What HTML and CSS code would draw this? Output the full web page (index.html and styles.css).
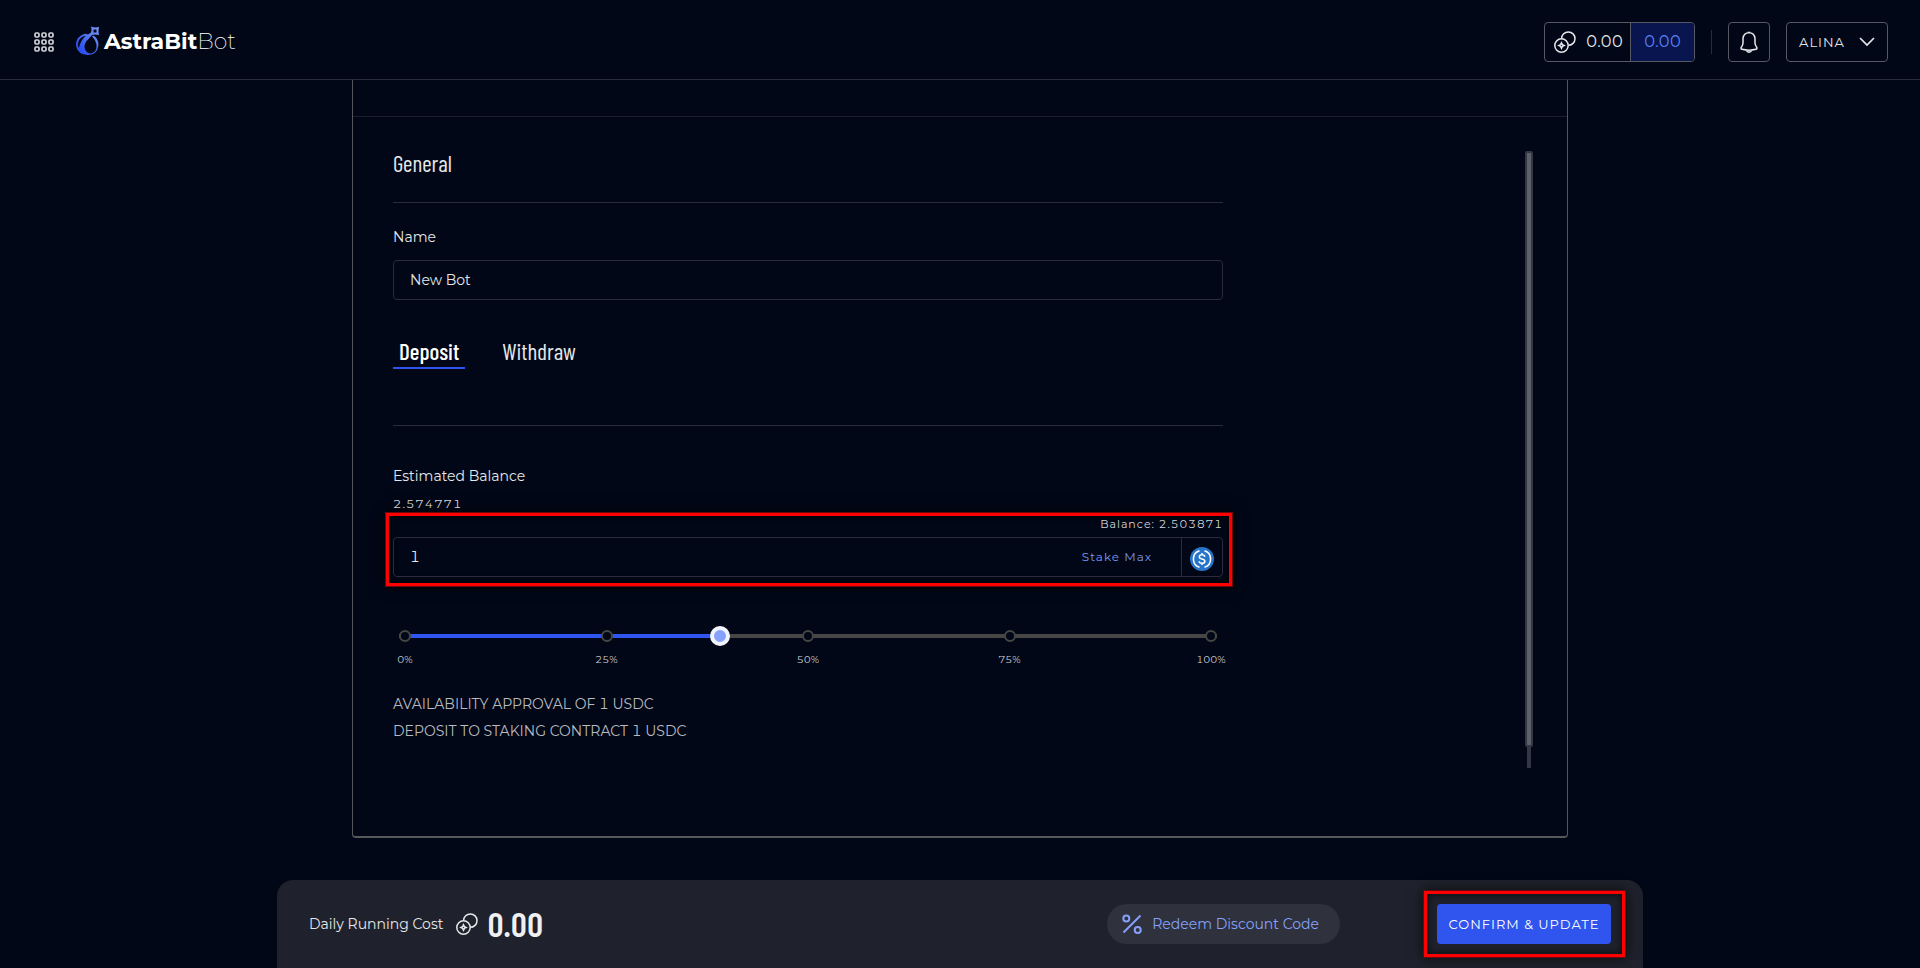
FILE: index.html
```html
<!DOCTYPE html>
<html lang="en">
<head>
<meta charset="utf-8">
<title>AstraBit Bot</title>
<link rel="stylesheet" href="styles.css">
</head>
<body>
<header class="topbar">
  <div class="brand">
    <button class="apps" aria-label="Apps">
      <svg width="20" height="20" viewBox="0 0 20 20" fill="none" stroke="currentColor" stroke-width="1.7"><rect x="1" y="1" width="4" height="4" rx="1.2"/><rect x="8" y="1" width="4" height="4" rx="1.2"/><rect x="15" y="1" width="4" height="4" rx="1.2"/><rect x="1" y="8" width="4" height="4" rx="1.2"/><rect x="8" y="8" width="4" height="4" rx="1.2"/><rect x="15" y="8" width="4" height="4" rx="1.2"/><rect x="1" y="15" width="4" height="4" rx="1.2"/><rect x="8" y="15" width="4" height="4" rx="1.2"/><rect x="15" y="15" width="4" height="4" rx="1.2"/></svg>
    </button>
    <a class="logo" href="#">
      <svg width="24" height="30" viewBox="0 0 24 30">
        <defs><linearGradient id="drop" x1="0" y1="1" x2="1" y2="0"><stop offset="0.2" stop-color="#2c50f0"/><stop offset="1" stop-color="#7f9cf8"/></linearGradient></defs>
        <path fill="url(#drop)" fill-rule="evenodd" d="M15 0.500Q19 2 23 1Q22 5 23 9Q19 8 16 9Q14 11 13 12.500Q8 17 8.500 21.500Q9.500 27 14.500 27.500Q19 27 20.300 22.500Q21.500 16 16 10.500L17.500 9.500Q23 13 22.300 20Q21 29 11.500 29Q2 28.500 0 20Q-0.500 11 8 8Q10 7.500 12 8.500L15 6.500Q16 4 15 0.500ZM17.500 3.500V6.500H20.500V3.500ZM10 9.500Q2 11 1.800 19Q2 20.500 3 22Q4 15 10 9.500Z"/>
      </svg>
      <span class="wordmark"><b>AstraBit</b><span class="wordmark-thin">Bot</span></span>
    </a>
  </div>
  <div class="account">
    <div class="credits">
      <span class="credit"><svg class="coins" width="22" height="22" viewBox="0 0 22 22" fill="none" stroke="currentColor" stroke-width="1.500"><circle cx="7.500" cy="14.500" r="6.700"/><path d="M7.600 7.500A6.700 6.700 0 1 1 14.300 14.300M7.500 11.800L8.400 13.600L10.200 14.500L8.400 15.400L7.500 17.200L6.600 15.400L4.800 14.500L6.600 13.600Z"/></svg>0.00</span>
      <span class="credit credit-blue">0.00</span>
    </div>
    <span class="separator"></span>
    <button class="bell" aria-label="Notifications">
      <svg width="18" height="22" viewBox="0 0 18 22" fill="none" stroke="currentColor" stroke-width="1.500" stroke-linejoin="round"><path d="M7.500 1.500H10.500M9 1.500Q3.500 2 3 7.500V12Q3 14 1.200 16.500Q0.700 18 2 18.300Q9 20 16 18.300Q17.300 18 16.800 16.500Q15 14 15 12V7.500Q14.500 2 9 1.500ZM6.500 20Q9 22.300 11.500 20"/></svg>
    </button>
    <button class="user">ALINA<svg width="16" height="10" viewBox="0 0 16 10" fill="none" stroke="currentColor" stroke-width="1.700"><path d="M1 1L8 8L15 1"/></svg></button>
  </div>
</header>
<main class="panel">
  <div class="panel-head"></div>
  <div class="panel-body">
    <form class="form">
      <h2 class="title">General</h2>
      <label class="label" for="name">Name</label>
      <input class="field" id="name" value="New Bot">
      <div class="tabs" role="tablist">
        <button type="button" class="tab tab-active" role="tab" aria-selected="true">Deposit</button>
        <button type="button" class="tab" role="tab" aria-selected="false">Withdraw</button>
      </div>
      <div class="label estimate-label">Estimated Balance</div>
      <div class="estimate">2.574771</div>
      <div class="stake marked">
        <label class="balance" for="amount">Balance: 2.503871</label>
        <div class="stake-field">
          <input class="amount" id="amount" value="1">
          <button type="button" class="max">Stake Max</button>
          <span class="token">
            <svg width="24" height="24" viewBox="0 0 24 24" fill="none" stroke="#fff" stroke-width="1.500"><circle cx="12" cy="12" r="12" fill="#2775ca" stroke="none"/><path d="M9.500 3.700A8.700 8.700 0 0 0 9.500 20.300M14.500 3.700A8.700 8.700 0 0 1 14.500 20.300M14.800 9.800Q14.500 7.800 12 7.800T9.300 9.800Q9.300 11.500 12 12T14.900 14.300Q14.700 16.200 12 16.200T9.100 14.200M12 6V8M12 16V18"/></svg>
          </span>
        </div>
      </div>
      <div class="slider">
        <div class="rail">
          <i class="stop"></i><i class="stop"></i><i class="stop"></i><i class="stop"></i><i class="stop"></i>
        </div>
        <input class="range" type="range" min="0" max="100" value="39" aria-label="Share of balance">
        <div class="ticks"><span>0%</span><span>25%</span><span>50%</span><span>75%</span><span>100%</span></div>
      </div>
      <p class="note">AVAILABILITY APPROVAL OF 1 USDC</p>
      <p class="note">DEPOSIT TO STAKING CONTRACT 1 USDC</p>
    </form>
    <div class="scroll"><div class="scroll-thumb"></div></div>
  </div>
</main>
<footer class="costbar">
  <div class="cost"><span class="cost-label">Daily Running Cost</span>
    <svg class="coins" width="22" height="22" viewBox="0 0 22 22" fill="none" stroke="currentColor" stroke-width="1.500"><circle cx="7.500" cy="14.500" r="6.700"/><path d="M7.600 7.500A6.700 6.700 0 1 1 14.300 14.300M7.500 11.800L8.400 13.600L10.200 14.500L8.400 15.400L7.500 17.200L6.600 15.400L4.800 14.500L6.600 13.600Z"/></svg>
    <strong class="cost-value">0.00</strong>
  </div>
  <button class="redeem"><svg width="20" height="20" viewBox="0 0 20 20" fill="none" stroke="currentColor" stroke-width="2"><path d="M1.500 18.500L18.500 1.500"/><circle cx="4.300" cy="4.500" r="3"/><circle cx="15.700" cy="16" r="3"/></svg>Redeem Discount Code</button>
  <div class="marked confirm-wrap"><button class="confirm">CONFIRM &amp; UPDATE</button></div>
</footer>
</body>
</html>
```
FILE: styles.css
```css
* { box-sizing: border-box; }
html, body { height: 100%; }
body {
  margin: 0;
  display: flex;
  flex-direction: column;
  background: #010716;
  color: #e6e7ea;
  font: 14px/20px Montserrat, "Open Sans", sans-serif;
  font-variant-numeric: tabular-nums;
  overflow: hidden;
}
button, input { font: inherit; font-variant-numeric: inherit; color: inherit; background: none; border: 0; padding: 0; margin: 0; }
svg { display: block; flex: none; }

.topbar {
  height: 80px;
  flex: none;
  display: flex;
  justify-content: space-between;
  align-items: center;
  padding: 4px 32px 0 34px;
  border-bottom: 1px solid #292c3c;
}
.brand, .account, .logo, .credits, .credit { display: flex; align-items: center; }
.brand { gap: 22px; }
.apps { color: #d3d4d8; }
.logo { gap: 4px; color: #fff; text-decoration: none; }
.logo svg { margin-bottom: 2px; }
.wordmark { font: 22px/28px Montserrat, Inter, sans-serif; }
.wordmark b { font-weight: 700; }
.wordmark-thin { font-weight: 200; }
.credits { height: 40px; border: 1px solid #565864; border-radius: 4px; overflow: hidden; line-height: 38px; }
.credit { height: 100%; gap: 10px; padding: 0 7px 0 9px; font-size: 16px; }
.credit-blue { background: #09154e; color: #5b80f7; border-left: 1px solid #565864; padding: 0 13px; }
.separator { width: 1px; height: 24px; background: #292c3c; margin: 0 16px; }
.bell, .user { height: 40px; border: 1px solid #565864; border-radius: 4px; display: flex; align-items: center; justify-content: center; }
.bell { width: 42px; margin-right: 16px; }
.user { width: 102px; gap: 14px; font-size: 13px; letter-spacing: 1px; }

.panel {
  width: 1216px;
  max-width: 100%;
  flex: none;
  margin: 0 auto;
  border: 1px solid #565758;
  border-top: 0;
  border-bottom-width: 2px;
  border-radius: 0 0 4px 4px;
}
.panel-head { height: 37px; border-bottom: 1px solid #1b1f2a; }
.panel-body { display: flex; justify-content: space-between; padding: 34px 34px 68px 40px; }
.form { width: 830px; }
.title { margin: 0; height: 52px; border-bottom: 1px solid #292c3c; font: 23px/24px "Barlow Condensed", "Liberation Sans Narrow", sans-serif; }
.label { display: block; margin: 24px 0 13px; color: #e6e7ea; }
.field { display: block; width: 100%; height: 40px; border: 1px solid #292c3c; border-radius: 4px; padding: 0 16px; }
.tabs { display: flex; gap: 31px; height: 126px; padding-top: 37px; border-bottom: 1px solid #292c3c; }
.tab { height: 32px; padding: 0 6px 2px; border-bottom: 2px solid transparent; font: 23px/28px "Barlow Condensed", "Liberation Sans Narrow", sans-serif; }
.tab-active { border-color: #2f55ee; color: #fff; font-weight: 500; }
.estimate-label { margin: 40px 0 8px; }
.estimate { font-size: 12px; letter-spacing: 1px; color: #d3d4d8; }
.marked { border: 4px solid #f00; outline: 1px solid #70050c; outline-offset: -1px; box-shadow: 0 0 12px #000a, inset 0 0 8px #000a; }
.stake { margin: -2px -10px 0 -8px; padding: 0 6px 6px 4px; }
.balance { display: block; text-align: right; font-size: 11px; line-height: 16px; letter-spacing: 1px; color: #d3d4d8; margin-bottom: 5px; }
.stake-field { display: flex; height: 40px; border: 1px solid #292c3c; border-radius: 4px; }
.amount { flex: 1; padding-left: 16px; }
.max { width: 128px; font-size: 12px; letter-spacing: 1px; color: #7b98f5; }
.token { width: 41px; border-left: 1px solid #292c3c; display: grid; place-items: center; padding-top: 4px; }
.slider { position: relative; margin: 43px 6px 0; }
.rail { display: flex; justify-content: space-between; height: 12px; align-items: center; background: linear-gradient(90deg, #2f55ee 39%, #464645 39%) center / 100% 4px no-repeat; }
.stop { width: 12px; height: 12px; border: 2px solid #464645; border-radius: 50%; background: #010716; }
.range { position: absolute; top: -4px; left: 0; width: 100%; height: 20px; appearance: none; }
.range::-webkit-slider-thumb { appearance: none; width: 20px; height: 20px; border-radius: 50%; border: 4px solid #f1f4fe; background: #86a1fb; }
.ticks { display: flex; justify-content: space-between; margin: 8px -24px 0; font-size: 10px; color: #d3d4d8; }
.ticks span { width: 60px; text-align: center; }
.note { margin: 0 0 7px; color: #b9bbc0; }
.slider + .note { margin-top: 24px; }
.scroll { width: 8px; height: 617px; background: linear-gradient(#333744, #333744) center / 4px 100% no-repeat; }
.scroll-thumb { height: 596px; border: 2px solid #333744; border-radius: 2px; background: #5d6068; }

.costbar {
  width: 1366px;
  max-width: 100%;
  flex: 1;
  margin: 42px auto 0;
  display: flex;
  align-items: flex-start;
  padding: 10px 17px 0 32px;
  background: #1f222c;
  border-radius: 16px 16px 0 0;
}
.cost { flex: 1; display: flex; align-items: center; gap: 9px; height: 68px; }
.cost-label { margin-right: 4px; }
.cost-value { font: 600 34px/36px "Barlow Condensed", "Liberation Sans Narrow", sans-serif; font-variant-numeric: tabular-nums; color: #f0f0f2; }
.redeem { display: flex; align-items: center; gap: 10px; height: 40px; margin: 14px 83px 0 0; padding: 0 21px 0 15px; border-radius: 20px; background: #2f313c; color: #86a1fb; }
.confirm-wrap { padding: 10px 11px 10px 10px; }
.confirm { height: 40px; width: 174px; border-radius: 4px; background: #2f55ee; color: #fff; font-size: 13px; letter-spacing: 1px; }
```
